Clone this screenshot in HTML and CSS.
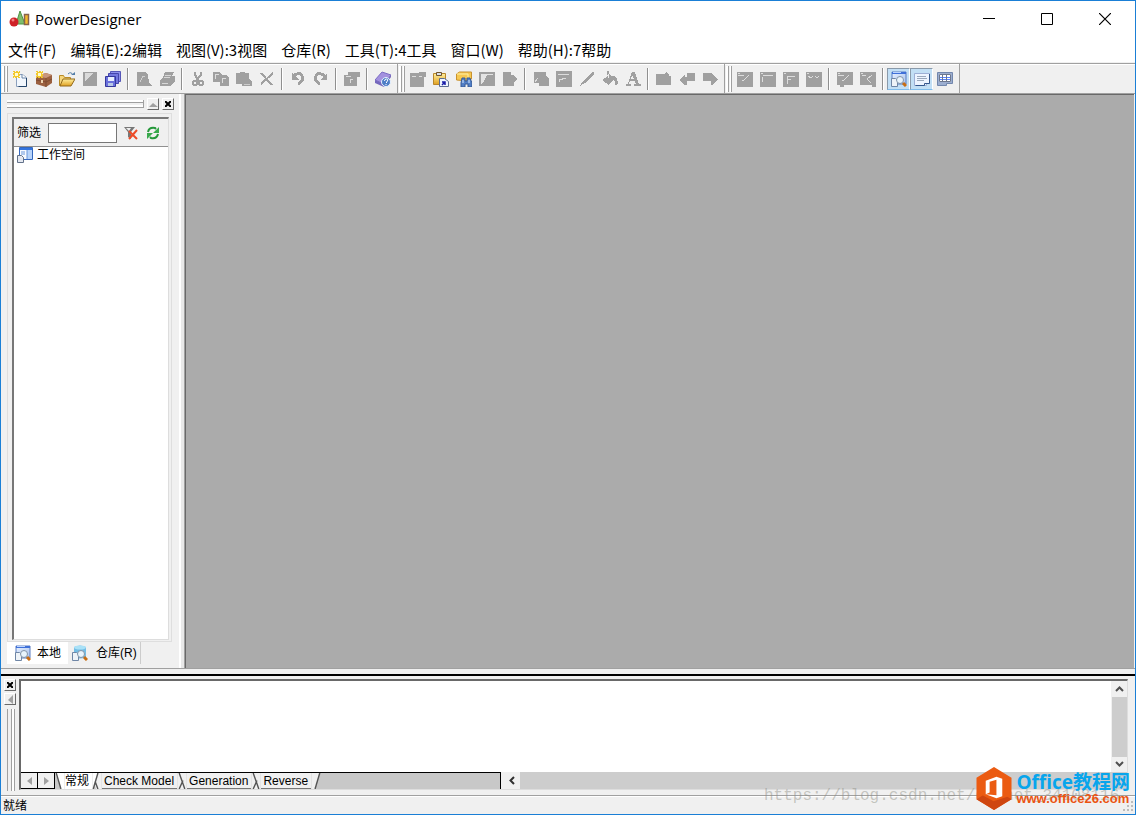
FILE: index.html
```html
<!DOCTYPE html>
<html lang="zh-CN">
<head>
<meta charset="utf-8">
<title>PowerDesigner</title>
<link rel="stylesheet" href="styles.css">
</head>
<body>
<svg class="defs" aria-hidden="true">
  <defs>
    <linearGradient id="blue" x1="0" y1="0" x2="1" y2="1"><stop offset="0" stop-color="#e8f1ff"/><stop offset="1" stop-color="#a9c3ee"/></linearGradient>
    <linearGradient id="gold" x1="0" y1="0" x2="0" y2="1"><stop offset="0" stop-color="#fff0a0"/><stop offset="1" stop-color="#e0a020"/></linearGradient>
    <symbol id="spark" viewBox="0 0 8 8"><path d="M0 0h2v1h1v-1h2v1h1v-1h1v2h-1v1h1v2h-1v1h1v1h-2v-1h-1v1h-2v-1h-1v1h-1v-2h1v-1h-1v-2h1v-1h-1z" fill="#f3c928"/><path d="M2 2h3v3h-3z" fill="#fffbd0"/></symbol>
    <symbol id="lens" viewBox="0 0 16 16"><path d="M1 1h14v12h-14z" fill="url(#blue)" stroke="#5b7cc0"/><path d="M1 1h14v2h-14z" fill="#3f70d8"/><path d="M2 1h8v1h-8z" fill="#b9d3ff"/><path d="M.500 7.500h4l2 2v6h-6z" fill="#eef3f8" stroke="#6f86a6"/><path d="M12 12l3 3" stroke="#c86d12" stroke-width="3"/><circle cx="9" cy="9" r="3.500" fill="#e8f4fc" stroke="#8294a8"/></symbol>
  </defs>
</svg>
<div class="window">
  <header class="title">
    <svg width="22" height="18" viewBox="0 0 22 18"><path d="M11 1l5 13h-9z" fill="#7fbd6c" stroke="#4e9445"/><path d="M15.500 4.500h4v10h-4z" fill="#f4b92e" stroke="#88634c" stroke-width="1.500"/><circle cx="5" cy="12" r="4.500" fill="#cf2127"/><circle cx="4" cy="10" r="1.500" fill="#f08080"/></svg>
    <h1>PowerDesigner</h1>
    <div class="controls">
      <button aria-label="最小化"><svg width="12" height="12"><path d="M0 5.500h12" stroke="#000"/></svg></button>
      <button aria-label="最大化"><svg width="12" height="12"><path d="M.5.500h11v11h-11z" fill="none" stroke="#000"/></svg></button>
      <button aria-label="关闭"><svg width="12" height="12"><path d="M0 0l12 12M12 0l-12 12" stroke="#000" stroke-width="1.200"/></svg></button>
    </div>
  </header>
  <nav class="menu">
    <button>文件(F)</button><button>编辑(E):2编辑</button><button>视图(V):3视图</button><button>仓库(R)</button><button>工具(T):4工具</button><button>窗口(W)</button><button>帮助(H):7帮助</button>
  </nav>
  <div class="toolbars">
    <div class="bar"><i class="grip"></i>
      <button aria-label="新建"><svg viewBox="0 0 16 16"><path d="M3.500 3.500h6l4 3v9h-10z" fill="#f2f7fd" stroke="#8ba0bd"/><path d="M13.500 7v8.500h-8" fill="none" stroke="#24446a"/><path d="M9 3v4h4" fill="#fff" stroke="#6a86a8"/><use href="#spark" x="0" y="0" width="8" height="8"/></svg></button>
      <button aria-label="新建项目"><svg viewBox="0 0 16 16"><path d="M0 5l10-3 6 2v8l-6 4-10-3z" fill="#9b6040"/><path d="M0 5l10 2 6-3-6-2z" fill="#c9967b"/><path d="M10 7v9M0 9l10 2 6-3" fill="none" stroke="#7f4c32"/><path d="M5 9h2v3h-2z" fill="#ecd2b0"/><use href="#spark" x="0" y="0" width="8" height="8"/></svg></button>
      <button aria-label="打开"><svg viewBox="0 0 16 16"><path d="M.5 14.500v-10h4l1 2h6v8z" fill="#f6d67b" stroke="#b98c27"/><path d="M1 15l3-7h12l-4 7z" fill="url(#gold)" stroke="#92691a"/><path d="M9 3q3-3 5 1" fill="none" stroke="#527da8"/><path d="M12 4h4v-3z" fill="#527da8"/></svg></button>
      <button aria-label="保存" disabled><svg viewBox="0 0 16 16"><path d="M1 1h14v14h-14z"/><path d="M3 2h9l-9 8z" fill="#dadada"/></svg></button>
      <button aria-label="全部保存"><svg viewBox="0 0 16 16"><path d="M5.500.500h10v10h-10z" fill="#8e91ec" stroke="#5556b8"/><path d="M3.500 2.500h10v10h-10z" fill="#7377df" stroke="#4546ac"/><path d="M.500 5.500h10v10h-10z" fill="#6a70dc" stroke="#35389c"/><path d="M3 6h6v4h-6z" fill="#e8efff"/><path d="M3 12h5v3h-5z" fill="#b9c9e7"/></svg></button>
      <i class="sep"></i>
      <button aria-label="打印预览" disabled><svg viewBox="0 0 16 16"><path d="M1 1h8l3 3v4l1 1v3l3 2v1h-15z"/><path d="M4 11l3-6h2" stroke="#d0d0d0" fill="none"/></svg></button>
      <button aria-label="打印" disabled><svg viewBox="0 0 16 16"><path d="M6 1h9l-2 4h3v6l-5 4h-10v-6l3-3z"/><path d="M6 4h6M5 6h6M3 12h6" stroke="#d8d8d8"/></svg></button>
      <i class="sep"></i>
      <button aria-label="剪切" disabled><svg viewBox="0 0 16 16"><path d="M5 1v3l4 6M11 1v3l-5 6" fill="none" stroke="#a0a0a0" stroke-width="2"/><circle cx="5" cy="12" r="2" fill="none" stroke="#a0a0a0" stroke-width="2"/><circle cx="11" cy="12" r="2" fill="none" stroke="#a0a0a0" stroke-width="2"/></svg></button>
      <button aria-label="复制" disabled><svg viewBox="0 0 16 16"><path d="M0 1h7l2 3h4l3 3v8h-9v-4h-7z"/><path d="M2 3.500h4M2.500 4v4M9 7.500h4M9.500 8v4" stroke="#ddd"/></svg></button>
      <button aria-label="粘贴" disabled><svg viewBox="0 0 16 16"><path d="M0 2h4v-1h5v1h4v5l3 4v4h-10v-2h-6z"/><path d="M8 13.500h6" stroke="#ccc"/></svg></button>
      <button aria-label="删除" disabled><svg viewBox="0 0 16 16"><path d="M2 2l11 12M14 2l-12 11" stroke="#a0a0a0" stroke-width="2"/></svg></button>
      <i class="sep"></i>
      <button aria-label="撤消" disabled><svg viewBox="0 0 16 16"><path d="M3 5q7-5 9 0t-4 8" fill="none" stroke="#a0a0a0" stroke-width="3"/><path d="M2 2v7h7z"/></svg></button>
      <button aria-label="重做" disabled><svg viewBox="0 0 16 16"><path d="M12 5q-7-5-9 0t4 8" fill="none" stroke="#a0a0a0" stroke-width="3"/><path d="M14 2v7h-7z"/></svg></button>
      <i class="sep"></i>
      <button aria-label="属性" disabled><svg viewBox="0 0 16 16"><path d="M4 1h12v5h-3v9h-13v-11h4z"/><path d="M2 5.500h5M6 8.500h3M6.500 8v4" stroke="#ddd"/></svg></button>
      <i class="sep"></i>
      <button aria-label="帮助"><svg viewBox="0 0 16 16"><path d="M0 9l7-8 9 3-7 9z" fill="#a391df" stroke="#7b6cc4"/><path d="M0 9v3l9 4 7-10v-2l-7 9z" fill="#7568bd"/><circle cx="11" cy="11" r="4.500" fill="#4e7ec7" stroke="#e7f2ff"/><path d="M9.500 10q0-2 2-2t1 2l-1 1v1M11 13v1" fill="none" stroke="#fff"/></svg></button>
    </div>
    <div class="bar"><i class="grip"></i>
      <button aria-label="图表属性" disabled><svg viewBox="0 0 16 16"><path d="M0 2h9v-1h7v5h-2v10h-14z"/><path d="M2 5.500h4M9 5.500h3" stroke="#ddd"/></svg></button>
      <button aria-label="粘贴为快捷方式"><svg viewBox="0 0 16 16"><path d="M.500 2.500h12v11h-12z" fill="url(#gold)" stroke="#b8862a"/><path d="M3.500 1.500h5v3h-5z" fill="#d9dfe8" stroke="#70552c"/><path d="M6.500 7.500h5l4 3v5h-9z" fill="#edf4ff" stroke="#5c6d92"/><path d="M9 14l3-3m-3 0h3v3" fill="none" stroke="#171ba7" stroke-width="1.500"/></svg></button>
      <button aria-label="查找"><svg viewBox="0 0 16 16"><path d="M.500 3l3-2h12v7l-4 2-11-1z" fill="#f6c851" stroke="#c9922f"/><path d="M1 3h11v5" fill="none" stroke="#fff1a6"/><path d="M6 7h3v3h2v-3h3l2 5v4h-4v-3h-3v3h-4v-4z" fill="#527fc6" stroke="#375a94"/><path d="M7 9v3M13 9v3" stroke="#d8ecff"/></svg></button>
      <button aria-label="图形" disabled><svg viewBox="0 0 16 16"><path d="M0 1h16v14h-16z"/><path d="M2 3h12l-5 6h-2l-5 4z" fill="#e4e4e4"/><path d="M5 10l3-6h5l-5 5z"/></svg></button>
      <button aria-label="转到" disabled><svg viewBox="0 0 16 16"><path d="M1 1h8v3h3l3 4-3 4v3h-11z"/></svg></button>
      <i class="sep"></i>
      <button aria-label="组合" disabled><svg viewBox="0 0 16 16"><path d="M1 1h12v4l3 2v8h-10v-3h-5z"/><path d="M2 11l3-4" fill="none" stroke="#ddd"/></svg></button>
      <button aria-label="符号格式" disabled><svg viewBox="0 0 16 16"><path d="M0 0h16v16h-16z"/><path d="M2 3.500h11M3.500 11v-3h3v-1h3" fill="none" stroke="#ddd"/></svg></button>
      <button aria-label="线型" disabled><svg viewBox="0 0 16 16"><path d="M1 15l3-5 9-9h2v2l-9 9z"/></svg></button>
      <button aria-label="填充" disabled><svg viewBox="0 0 16 16"><path d="M5 0h2v3l5 5-5 6-7-5 5-4z"/><path d="M10 6q5 0 4 8" fill="none" stroke="#a0a0a0" stroke-width="3"/><path d="M3 7l3-3v3" fill="none" stroke="#eee"/></svg></button>
      <button aria-label="字体" disabled><svg viewBox="0 0 16 16"><path d="M1 13h2l4-12h3l4 12h2v2h-7v-2h2l-1-3h-5l-1 3h2v2h-5z"/><path d="M6 8h3l-2-4z" fill="#f0f0f0"/></svg></button>
      <i class="sep"></i>
      <button aria-label="上级" disabled><svg viewBox="0 0 16 16"><path d="M0 3h8l2-2 3 2v2h2v9h-15z"/></svg></button>
      <button aria-label="后退" disabled><svg viewBox="0 0 16 16"><path d="M0 9l6-5v2h2v-4h8v8h-8v4h-2z"/></svg></button>
      <button aria-label="前进" disabled><svg viewBox="0 0 16 16"><path d="M16 9l-6-6v-1h-9v8h8v4h1z"/></svg></button>
    </div>
    <div class="bar"><i class="grip"></i>
      <button aria-label="检查模型" disabled><svg viewBox="0 0 16 16"><path d="M0 1h16v15h-16z"/><path d="M1 2.500h2M1 4.500h6M12 4l-5 5h-2" fill="none" stroke="#ddd"/></svg></button>
      <button aria-label="生成" disabled><svg viewBox="0 0 16 16"><path d="M0 1h16v15h-16z"/><path d="M1 2.500h2M3 4.500h10M2.500 6v5" stroke="#ddd"/></svg></button>
      <button aria-label="逆向" disabled><svg viewBox="0 0 16 16"><path d="M0 1h16v15h-16z"/><path d="M1 2.500h2M4.500 13v-8h7M5 8.500h3" fill="none" stroke="#ddd"/></svg></button>
      <button aria-label="比较" disabled><svg viewBox="0 0 16 16"><path d="M0 1h16v15h-16z"/><path d="M1 2.500h2M2 5l3 2 2-2M9 5l2 2 2-2" fill="none" stroke="#ddd"/></svg></button>
      <i class="sep"></i>
      <button aria-label="合并" disabled><svg viewBox="0 0 16 16"><path d="M0 1h16v13h-9v2h-4v-2h-3z"/><path d="M1 2.500h2M1 4.500h6M12 4l-5 5h-2" fill="none" stroke="#ddd"/></svg></button>
      <button aria-label="拆分" disabled><svg viewBox="0 0 16 16"><path d="M0 1h16v15h-4v-2h-12z"/><path d="M1 2.500h2M2 4.500h4M12 4l-5 4 4 4" fill="none" stroke="#ddd"/></svg></button>
      <i class="sep"></i>
      <button class="on" aria-label="浏览器"><svg><use href="#lens"/></svg></button>
      <button class="on" aria-label="输出"><svg viewBox="0 0 16 16"><path d="M.500 2.500h15v10h-3v2h-12z" fill="#edf4ff" stroke="#9dafd5"/><path d="M3 5.500h9M3 7.500h10M3 9.500h7" stroke="#9aa8bc"/><path d="M15.500 3v9.500h-5v2h-9" fill="none" stroke="#34578d"/></svg></button>
      <button aria-label="结果列表"><svg viewBox="0 0 16 16"><path d="M.500 1.500h15v11h-6v2h-9z" fill="#9caed0" stroke="#7287ad"/><path d="M2 3h12v8h-12z" fill="#fff"/><path d="M2 6.500h12M2 8.500h12" stroke="#5784ff"/><path d="M2.500 3.500h11v7h-11zM5.500 3v8M9.500 3v8" fill="none" stroke="#6d778d"/></svg></button>
    </div>
  </div>
  <main class="work">
    <aside class="browser">
      <div class="caption"><i class="stripes"></i><button class="mini" aria-label="折叠"><svg width="9" height="5"><path d="M0 5l4-4 5 4z" fill="#a0a0a0"/></svg></button><button class="mini" aria-label="关闭浏览器"><svg width="6" height="6"><path d="M0 0l6 6M6 0l-6 6" stroke="#000" stroke-width="2"/></svg></button></div>
      <div class="frame"><div class="tree">
        <div class="filter"><label for="filter">筛选</label><input id="filter" type="text">
          <button aria-label="清除筛选"><svg viewBox="0 0 16 16"><path d="M1 2h11l-4 5v7l-3-2v-5z" fill="#777"/><path d="M3 3h5l-2 3z" fill="#eee"/><path d="M6 6l8 8M14 5l-8 9" stroke="#ed4b27" stroke-width="2"/></svg></button>
          <button aria-label="刷新"><svg viewBox="0 0 16 16"><path d="M3 7q1-5 7-4l1 1M13 9q-1 5-7 4l-1-1" fill="none" stroke="#25983a" stroke-width="2"/><path d="M14 2v6h-6zM2 14v-6h6z" fill="#38aa4c"/></svg></button>
        </div>
        <div class="list"><a href="#workspace"><svg width="16" height="16" viewBox="0 0 16 16"><path d="M2.500.500h13v12h-13z" fill="#f7faff" stroke="#3568be"/><path d="M3 1h12v2h-12z" fill="#3374df"/><path d="M10 3h5v9h-5z" fill="#b8d4fa"/><path d="M4 5h4M4 7h4M10 3v9" stroke="#6a98db"/><path d="M.500 8.500h4l2 2v5h-6z" fill="#e4e8f0" stroke="#63728a"/></svg>工作空间</a></div>
      </div></div>
      <div class="tabs"><button class="active"><svg width="16" height="16"><use href="#lens"/></svg>本地</button><button><svg width="16" height="16" viewBox="0 0 16 16"><path d="M2 2q6-3 12 0v10q-6 3-12 0z" fill="#73bde5"/><ellipse cx="8" cy="2.500" rx="6" ry="2" fill="#a9e1f7"/><path d="M.500 7.500h4l2 2v6h-6z" fill="#eef3f8" stroke="#6f86a6"/><path d="M12 12l3 3" stroke="#c86d12" stroke-width="3"/><circle cx="9" cy="9" r="3.500" fill="#e8f4fc" stroke="#8294a8"/></svg>仓库(R)</button></div>
    </aside>
    <section class="canvas" aria-label="工作区"></section>
  </main>
  <section class="output">
    <div class="gutter"><button class="mini" aria-label="关闭输出"><svg width="6" height="6"><path d="M0 0l6 6M6 0l-6 6" stroke="#000" stroke-width="2"/></svg></button><button class="mini" aria-label="折叠输出"><svg width="5" height="9"><path d="M5 0v9l-5-4z" fill="#a0a0a0"/></svg></button><i class="rails"></i></div>
    <div class="log">
      <div class="upper"><div class="text"></div><div class="vscroll"><svg width="9" height="6"><path d="M1 5l3.500-3.500L8 5" fill="none" stroke="#505050" stroke-width="2"/></svg><i></i><svg width="9" height="6"><path d="M1 1l3.500 3.500L8 1" fill="none" stroke="#505050" stroke-width="2"/></svg></div></div>
      <div class="lower">
        <div class="sheets">
          <button class="nav" aria-label="上一页"><svg width="5" height="8"><path d="M5 0v8l-5-4z"/></svg></button><button class="nav" aria-label="下一页"><svg width="5" height="8"><path d="M0 0v8l5-4z"/></svg></button>
          <button class="sheet first"><svg viewBox="0 0 10 17"><path d="M0 0h10v17h-4z" fill="#fff"/><path d="M1 0l5 17" stroke="#555" stroke-width="1.500"/></svg><span>常规</span></button>
          <button class="sheet"><svg viewBox="0 0 10 17"><path d="M0 0h7l-6 17h-1z" fill="#fff"/><path d="M6 0h4v17h-6l-2-7z" fill="#f0f0f0"/><path d="M6 0l-5 17M3 9l3 8" stroke="#555" stroke-width="1.500"/></svg><span>Check Model</span></button>
          <button class="sheet"><svg viewBox="0 0 10 17"><path d="M0 0h10v17h-10z" fill="#f0f0f0"/><path d="M2 0l6 17M6 8l-4 9" stroke="#555" stroke-width="1.500"/></svg><span>Generation</span></button>
          <button class="sheet"><svg viewBox="0 0 10 17"><path d="M0 0h10v17h-10z" fill="#f0f0f0"/><path d="M2 0l6 17M6 8l-4 9" stroke="#555" stroke-width="1.500"/></svg><span>Reverse</span></button>
          <svg class="tail" viewBox="0 0 10 17"><path d="M0 0h9l-5 17h-4z" fill="#f0f0f0"/><path d="M9 0l-5 17" stroke="#555" stroke-width="1.500"/></svg>
        </div>
        <div class="hscroll"><svg width="6" height="9"><path d="M5 1l-3.500 3.500L5 8" fill="none" stroke="#303030" stroke-width="2"/></svg><i></i></div>
      </div>
    </div>
  </section>
  <footer class="status">就绪<svg width="10" height="10"><path d="M8 0h2v2h-2zM4 4h2v2h-2zM8 4h2v2h-2zM0 8h2v2h-2zM4 8h2v2h-2zM8 8h2v2h-2z" fill="#bcbcbc"/></svg></footer>
  <div class="watermark">https://blog.csdn.net/qq_het_34108116</div>
  <div class="brand">
    <svg width="36" height="43" viewBox="0 0 37 44"><path d="M18.500 0l18 11v22l-18 11-18-11v-22z" fill="#eb5b12"/><path d="M.500 33l18 11 18-11-18-11z" fill="#cf4610"/><path d="M18 3l16 9v18l-16 5-15-8v-15z" fill="#eb5b12"/><path d="M10 14l11-4 6 2v18l-6 2-11-4 11 1v-16l-7 2v11l-4 2z" fill="#fff"/></svg>
    <div><strong>Office教程网</strong><span>www.office26.com</span></div>
  </div>
</div>
</body>
</html>
```
FILE: styles.css
```css
* { box-sizing: border-box; }
body { margin: 0; }
button { border: 0; padding: 0; background: none; color: inherit; font: inherit; }
svg { display: block; flex: none; }
i { display: block; flex: none; }
.defs { position: absolute; width: 0; height: 0; }
.window { position: relative; display: flex; flex-direction: column; height: 100vh; border: 1px solid #1a7fd6; background: #f0f0f0; overflow: hidden; color: #000; font: 12px/16px "Liberation Sans", "Noto Sans CJK SC", sans-serif; }
.title { display: flex; align-items: center; gap: 4px; height: 36px; padding: 0 1px 0 8px; background: #fff; }
.title h1 { flex: 1; margin: 0; font: 15px/20px "Open Sans", sans-serif; }
.controls { display: flex; height: 100%; }
.controls button { width: 58px; display: grid; place-items: center; }
.menu { display: flex; gap: 14px; height: 25px; padding-left: 7px; background: #fff; font: 15px/26px "Noto Sans CJK SC", sans-serif; white-space: nowrap; }
.toolbars { display: flex; height: 30px; margin-top: 1px; border-top: 1px solid #a0a0a0; box-shadow: inset 0 1px #fff; }
.bar { display: flex; align-items: center; padding-right: 3px; border-right: 1px solid #a0a0a0; }
.bar button { width: 23px; height: 22px; display: grid; place-items: center; }
.bar svg { width: 16px; height: 16px; }
.bar button:disabled svg { fill: #a0a0a0; shape-rendering: crispEdges; }
.bar .on { background: #c2dff5; border: 1px solid; border-color: #8a9aaa #fff #7fbcec #8a9aaa; }
.grip { width: 8px; height: 26px; background: linear-gradient(90deg, transparent 1px, #fff 1px 3px, #a0a0a0 3px 4px, transparent 4px 5px, #fff 5px 6px, #a0a0a0 6px 7px, transparent 7px); }
.sep { width: 8px; height: 22px; background: linear-gradient(90deg, transparent 3px, #909090 3px 4px, #fff 4px 5px, transparent 5px); }
.work { flex: 1; display: flex; min-height: 0; border-top: 1px solid #a0a0a0; border-bottom: 1px solid #a0a0a0; }
.browser { display: flex; flex-direction: column; width: 184px; padding: 3px 10px 4px 6px; border-right: 1px solid #a0a0a0; box-shadow: inset -3px 0 #e8e8e8, inset -5px 0 #fff; }
.caption { display: flex; align-items: center; gap: 2px; height: 14px; }
.stripes { flex: 1; height: 8px; border: solid #a0a0a0; border-width: 0 1px 1px 0; background: linear-gradient(#fff 2px, #a0a0a0 2px 3px, #f0f0f0 3px 5px, #fff 5px); }
.mini { display: grid; place-items: center; width: 12px; height: 12px; border: 1px solid; border-color: #fff #696969 #696969 #fff; }
.caption .mini { margin-left: 1px; }
.frame { flex: 1; display: flex; margin: 2px 2px 0 0; padding: 3px 2px 1px 4px; border: 1px solid #dedede; }
.tree { flex: 1; display: flex; flex-direction: column; border: solid; border-width: 2px 1px 1px 2px; border-color: #777 #ddd #ddd #777; background: #fff; }
.filter { display: flex; align-items: center; height: 28px; padding-left: 3px; border-bottom: 1px solid #909090; background: #f0f0f0; }
.filter label { width: 31px; }
.filter input { width: 69px; height: 20px; border: 1px solid #777; padding: 0 2px; background: #fff; }
.filter button { margin-left: 6px; }
.filter button svg { width: 16px; height: 16px; }
.list { flex: 1; padding-left: 3px; }
.list a { display: flex; align-items: center; gap: 4px; color: inherit; text-decoration: none; }
.tabs { display: flex; height: 22px; }
.tabs button { display: flex; align-items: center; gap: 6px; padding: 0 3px 0 8px; border-right: 1px solid #ccc; white-space: nowrap; }
.tabs .active { padding-right: 7px; background: #fff; border: 0; }
.tabs button + button { padding-left: 4px; gap: 8px; }
.canvas { flex: 1; margin-right: 1px; border: solid #696969; border-width: 1px 0 0 1px; background: #ababab; }
.output { display: flex; height: 122px; margin-top: 5px; padding: 3px 7px 1px 0; border-top: 2px solid #000; border-bottom: 1px solid #a0a0a0; }
.gutter { display: flex; flex-direction: column; gap: 2px; width: 18px; padding-left: 3px; }
.rails { flex: 1; width: 8px; margin: 2px 0 3px 3px; border: solid #a0a0a0; border-width: 0 1px; background: linear-gradient(90deg, transparent 3px, #a0a0a0 3px 4px, #fff 4px 6px, transparent 6px); }
.log { flex: 1; display: flex; flex-direction: column; margin-bottom: 4px; border: solid; border-width: 2px 1px 1px 2px; border-color: #696969 #ddd #ddd #696969; min-width: 0; }
.upper { flex: 1; display: flex; }
.text { flex: 1; background: #fff; }
.vscroll { display: flex; flex-direction: column; align-items: center; justify-content: space-between; width: 16px; padding: 5px 0; }
.vscroll i { width: 15px; height: 60px; background: #cdcdcd; }
.lower { display: flex; height: 17px; }
.sheets { flex: none; display: flex; width: 480px; border: solid #000; border-width: 1px 1px 0 0; background: #c8c8c8; font-size: 12px; line-height: 16px; }
.nav { display: grid; place-items: center; width: 17px; border: solid #000; border-width: 0 1px 1px 0; background: #f0f0f0; fill: #a0a0a0; }
.sheet { display: flex; white-space: nowrap; }
.sheet svg, .tail { width: 10px; height: 16px; }
.sheet span { padding: 0 3px 0 2px; background: #f0f0f0; border-bottom: 1px solid #777; }
.sheet.first span { background: #fff; padding: 0 3px 0 0; border: 0; }
.hscroll { flex: 1; display: flex; align-items: center; gap: 5px; padding-left: 8px; }
.hscroll i { flex: 1; height: 100%; background: #cdcdcd; }
.status { display: flex; justify-content: space-between; align-items: center; height: 18px; padding: 0 2px; border-top: 1px solid #fff; }
.watermark { position: absolute; left: 763px; bottom: 8px; color: rgba(140, 140, 130, .45); font: 16px/20px "Liberation Mono", monospace; white-space: nowrap; }
.brand { position: absolute; right: 5px; bottom: 4px; display: flex; align-items: center; gap: 4px; }
.brand div { display: flex; flex-direction: column; }
.brand strong { color: #08a5ec; font: bold 19px/20px "Open Sans", "Noto Sans CJK SC", sans-serif; white-space: nowrap; }
.brand span { color: #eb5412; font: bold 13px/14px "Liberation Sans", sans-serif; }
```
